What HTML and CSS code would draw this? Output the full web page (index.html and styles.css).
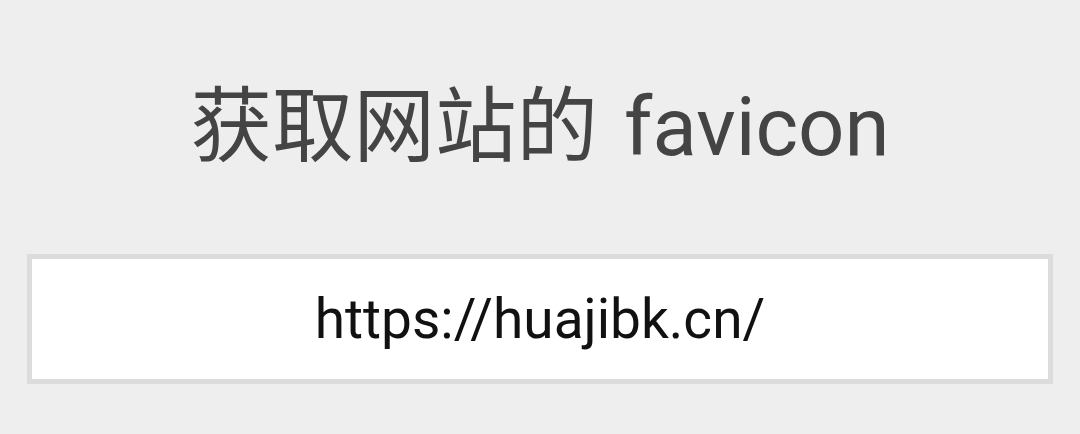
FILE: index.html
```html
<!DOCTYPE html>
<html lang="zh-CN">
<head>
<meta charset="utf-8">
<link rel="stylesheet" href="styles.css">
</head>
<body>
<main class="page">
  <h1 class="title">获取网站的 favicon</h1>
  <div class="field">
    <input class="url" type="text" value="https://huajibk.cn/">
  </div>
</main>
</body>
</html>
```
FILE: styles.css
```css
html, body {
  margin: 0;
  padding: 0;
  background: #eeeeee;
}
.page {
  width: 1080px;
  height: 434px;
  display: flex;
  flex-direction: column;
  align-items: center;
  padding-top: 80px;
  box-sizing: border-box;
}
.title {
  margin: 0;
  font-family: Roboto, "Noto Sans CJK SC", sans-serif;
  font-weight: 400;
  font-size: 81.5px;
  line-height: 94px;
  word-spacing: 6px;
  color: #444444;
}
.field {
  margin-top: 80px;
  width: 1026px;
  height: 130px;
  border: 5px solid #dcdcdc;
  box-sizing: border-box;
  background: #ffffff;
  display: flex;
}
.url {
  flex: 1;
  border: none;
  outline: none;
  background: transparent;
  text-align: center;
  font-family: Roboto, sans-serif;
  font-size: 55px;
  color: #111111;
  padding: 0;
}
```
